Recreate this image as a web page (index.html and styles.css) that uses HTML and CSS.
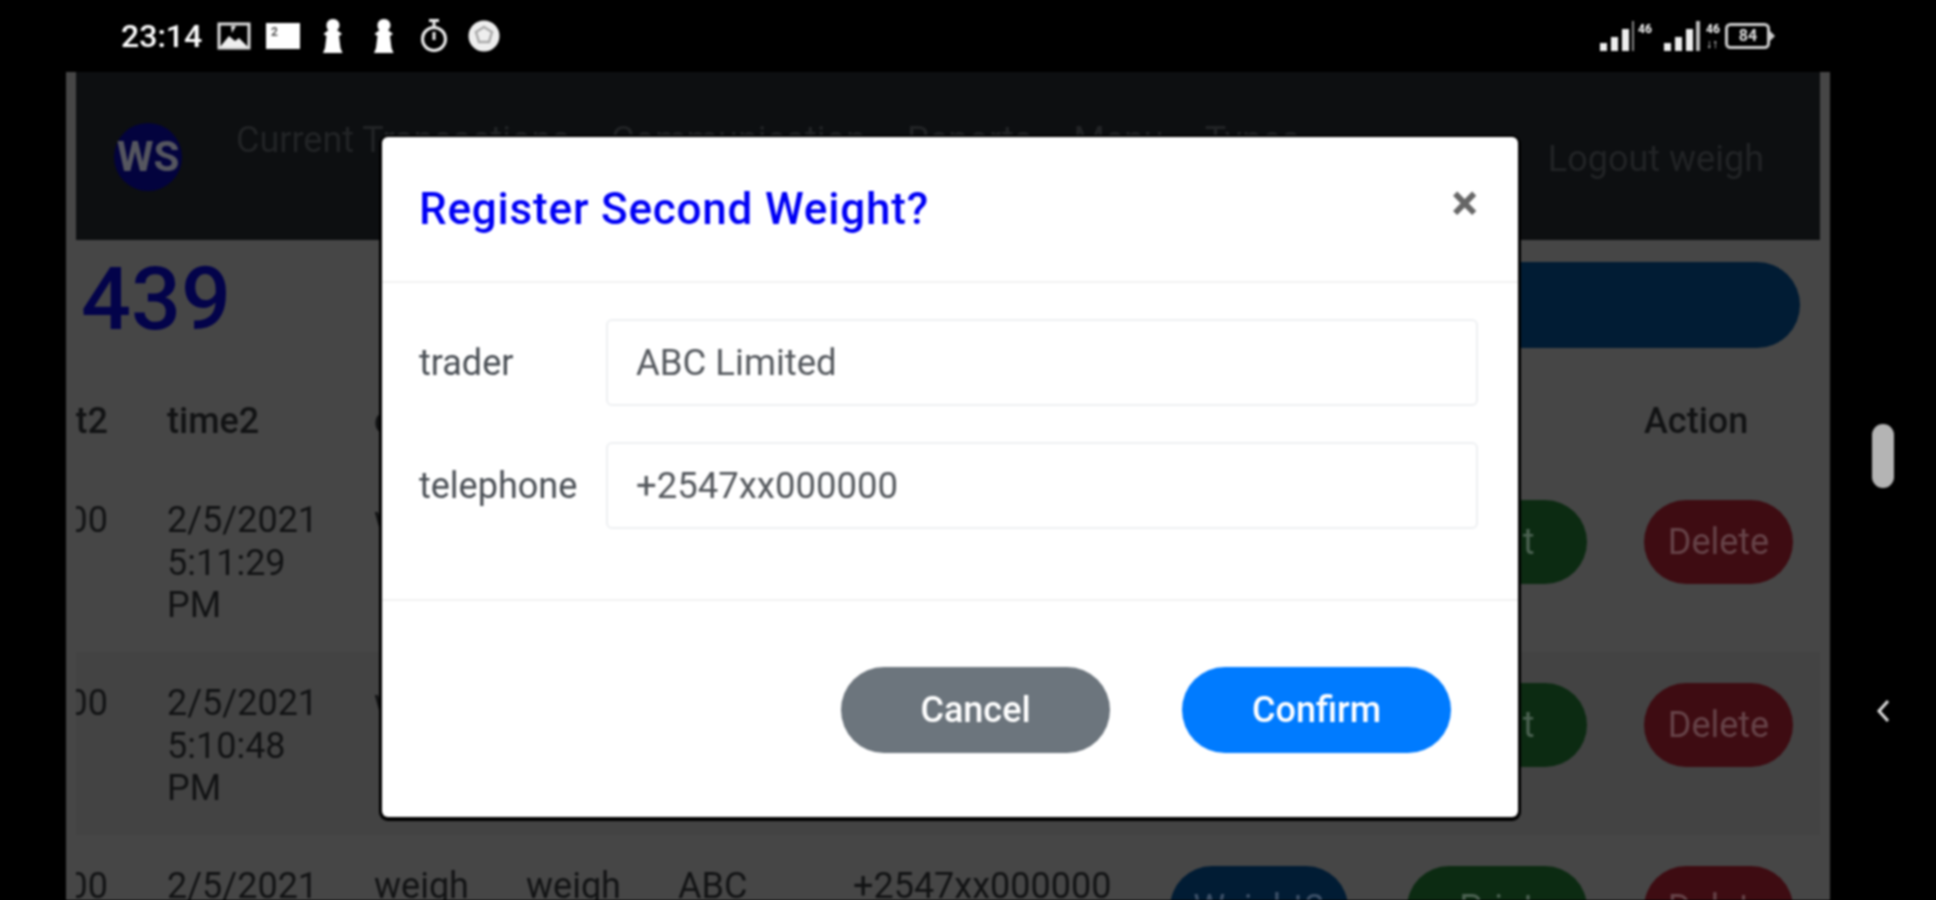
FILE: index.html

```html
<!DOCTYPE html>
<html lang="en">
<head>
    <meta charset="UTF-8">
    <meta name="viewport" content="width=device-width, initial-scale=1.0">
    <title>Weighbridge</title>
    <link rel="stylesheet" href="styles.css">
</head>
<body>
    <div class="screen">
        <!-- phone status bar -->
        <div class="status-bar">
            <span class="clock">23:14</span>
            <svg class="st-icon icon-pic" viewBox="0 0 34 28"><path d="M2 2h30v24H2z" fill="none" stroke="#ddd" stroke-width="3"/><path d="M3 25l9-11 6 5 4-3 9 9z" fill="#eee"/><path d="M14 4h5l-4 7z" fill="#ddd"/></svg>
            <svg class="st-icon icon-msg" viewBox="0 0 34 28"><path d="M0 1h34v26H0z" fill="#fff"/><text x="5" y="14" class="st-tiny-dark">2</text></svg>
            <svg class="st-icon icon-pawn" viewBox="0 0 20 34"><path d="M10 0c4 0 6.500 3 6.500 6 0 2.500-1 4-2.500 5l5 4-3 2 1.500 12 2 5H0l2-5 1.500-12-3-2 5-4C4 10 3.500 8.500 3.500 6c0-3 2.500-6 6.500-6z" fill="#fff"/></svg>
            <svg class="st-icon icon-pawn" viewBox="0 0 20 34"><path d="M10 0c4 0 6.500 3 6.500 6 0 2.500-1 4-2.500 5l5 4-3 2 1.500 12 2 5H0l2-5 1.500-12-3-2 5-4C4 10 3.500 8.500 3.500 6c0-3 2.500-6 6.500-6z" fill="#fff"/></svg>
            <svg class="st-icon icon-timer" viewBox="0 0 28 34"><circle cx="14" cy="20" r="11.500" fill="none" stroke="#eee" stroke-width="3"/><path d="M9 1.500h10M14 2v5M14 13v8" stroke="#eee" stroke-width="3" fill="none"/></svg>
            <svg class="st-icon icon-round" viewBox="0 0 32 34"><circle cx="16" cy="17" r="15.500" fill="#eee"/><path d="M16 8l8 5-3 10H11L8 13z" fill="none" stroke="#aaa" stroke-width="2.500"/></svg>

            <div class="status-right">
                <svg class="st-signal" viewBox="0 0 60 30"><path d="M0 22h7v8H0zM11 16h7v14h-7zM22 8h7v22h-7z" fill="#eee"/><path d="M32 0h2v30h-2z" fill="#888"/><text x="38" y="12" class="st-tiny">46</text></svg>
                <svg class="st-signal" viewBox="0 0 60 30"><path d="M0 22h7v8H0zM11 16h7v14h-7zM22 8h7v22h-7z" fill="#eee"/><path d="M32 0h4v30h-4z" fill="#bbb"/><text x="42" y="12" class="st-tiny">46</text><text x="42" y="27" class="st-tiny">↓↑</text></svg>
                <svg class="st-battery" viewBox="0 0 50 26"><rect x="1.500" y="1.500" width="42" height="23" rx="4" fill="none" stroke="#ccc" stroke-width="3"/><path d="M45 8l5 5-5 5z" fill="#ccc"/><text x="23" y="18" text-anchor="middle" class="st-batt-text">84</text></svg>
            </div>
        </div>

        <div class="main">
            <div class="side-left"></div>

            <div class="page">
                <nav class="navbar">
                    <div class="logo">WS</div>
                    <a class="nav-link">Current Transactions</a>
                    <a class="nav-link">Communication</a>
                    <a class="nav-link">Reports</a>
                    <a class="nav-link">Menu</a>
                    <a class="nav-link">Types</a>
                    <a class="nav-logout">Logout weigh</a>
                </nav>

                <div class="summary">
                    <div class="count">439</div>
                    <div class="summary-bar"></div>
                </div>

                <div class="table-wrap">
                    <table class="tx-table">
                        <thead>
                            <tr>
                                <th class="col-first">weight2</th>
                                <th class="col-time">time2</th>
                                <th class="col-op">operator1</th>
                                <th class="col-op">operator2</th>
                                <th class="col-trader">trader</th>
                                <th class="col-phone">telephone</th>
                                <th class="col-btn">Weight2</th>
                                <th class="col-btn">Print</th>
                                <th class="col-action">Action</th>
                            </tr>
                        </thead>
                        <tbody>
                            <tr>
                                <td class="col-first">2000</td>
                                <td class="col-time">2/5/2021 5:11:29 PM</td>
                                <td>weigh</td>
                                <td>weigh</td>
                                <td>ABC Limited</td>
                                <td>+2547xx000000</td>
                                <td><button class="pill pill-blue">Weight2</button></td>
                                <td><button class="pill pill-green">Print</button></td>
                                <td><button class="pill pill-red">Delete</button></td>
                            </tr>
                            <tr class="striped">
                                <td class="col-first">3000</td>
                                <td class="col-time">2/5/2021 5:10:48 PM</td>
                                <td>weigh</td>
                                <td>weigh</td>
                                <td>ABC Limited</td>
                                <td>+2547xx000000</td>
                                <td><button class="pill pill-blue">Weight2</button></td>
                                <td><button class="pill pill-green">Print</button></td>
                                <td><button class="pill pill-red">Delete</button></td>
                            </tr>
                            <tr>
                                <td class="col-first">1000</td>
                                <td class="col-time">2/5/2021 5:09:12 PM</td>
                                <td>weigh</td>
                                <td>weigh</td>
                                <td>ABC Limited</td>
                                <td>+2547xx000000</td>
                                <td><button class="pill pill-blue">Weight2</button></td>
                                <td><button class="pill pill-green">Print</button></td>
                                <td><button class="pill pill-red">Delete</button></td>
                            </tr>
                        </tbody>
                    </table>
                </div>

                <!-- confirm dialog -->
                <div class="modal">
                    <div class="modal-header">
                        <h5 class="modal-title">Register Second Weight?</h5>
                        <span class="modal-close">&times;</span>
                    </div>
                    <div class="modal-body">
                        <div class="field">
                            <label class="field-label">trader</label>
                            <input class="field-input" value="ABC Limited">
                        </div>
                        <div class="field">
                            <label class="field-label">telephone</label>
                            <input class="field-input" value="+2547xx000000">
                        </div>
                    </div>
                    <div class="modal-footer">
                        <button class="modal-btn btn-cancel">Cancel</button>
                        <button class="modal-btn btn-confirm">Confirm</button>
                    </div>
                </div>
            </div>

            <div class="side-right">
                <div class="scroll-thumb"></div>
                <svg class="chevron" viewBox="0 0 14 24"><path d="M12 2L3 12l9 10" fill="none" stroke="#ddd" stroke-width="3"/></svg>
            </div>
        </div>
    </div>
</body>
</html>
```

FILE: styles.css

```css
* {
    box-sizing: border-box;
}
body {
    margin: 0;
    background: #000;
    font-family: Roboto, 'Liberation Sans', sans-serif;
}
.screen {
    height: 900px;
    overflow: hidden;
    display: flex;
    flex-direction: column;
    background: #000;
    filter: blur(1px);
}

/* status bar */
.status-bar {
    height: 72px;
    flex: none;
    display: flex;
    align-items: center;
    padding-left: 121px;
    color: #fff;
}
.clock {
    font-size: 32px;
    font-weight: 500;
    width: 96px;
}
.st-icon {
    display: block;
}
.icon-pic {
    width: 34px;
    height: 28px;
    margin-right: 15px;
}
.icon-msg {
    width: 34px;
    height: 28px;
    margin-right: 23px;
}
.icon-pawn {
    width: 20px;
    height: 34px;
    margin-right: 31px;
}
.icon-timer {
    width: 28px;
    height: 34px;
    margin-left: -5px;
    margin-right: 20px;
}
.icon-round {
    width: 32px;
    height: 34px;
}
.status-right {
    margin-left: auto;
    margin-right: 161px;
    display: flex;
    align-items: center;
}
.st-signal {
    width: 60px;
    height: 30px;
    margin-right: 4px;
}
.st-battery {
    width: 50px;
    height: 26px;
    margin-left: -3px;
}
.st-tiny {
    font: 700 12px Roboto, sans-serif;
    fill: #fff;
}
.st-tiny-dark {
    font: 700 12px Roboto, sans-serif;
    fill: #555;
}
.st-batt-text {
    font: 700 16px Roboto, sans-serif;
    fill: #ddd;
}

.main {
    flex: 1;
    display: flex;
    min-height: 0;
}
.side-left {
    width: 66px;
    flex: none;
}
.page {
    width: 1764px;
    flex: none;
    position: relative;
    background: #464646;
    padding: 0 10px;
    overflow: hidden;
    font-size: 36px;
    color: #121314;
}
.side-right {
    flex: 1;
    display: flex;
    flex-direction: column;
    align-items: center;
    padding-top: 352px;
}
.scroll-thumb {
    width: 22px;
    height: 64px;
    border-radius: 11px;
    background: #b4b4b4;
}
.chevron {
    width: 14px;
    height: 24px;
    margin-top: 211px;
}

/* navbar */
.navbar {
    height: 168px;
    background: #0d0f11;
    display: flex;
    align-items: flex-start;
    color: #222426;
}
.logo {
    width: 68px;
    height: 68px;
    margin: 51px 0 0 38px;
    border-radius: 50%;
    background: #03033e;
    color: #55565f;
    font-size: 42px;
    font-weight: 700;
    line-height: 68px;
    text-align: center;
}
.nav-link {
    margin: 47px 0 0 54px;
    line-height: 42px;
}
.nav-link + .nav-link {
    margin-left: 41px;
}
.nav-logout {
    margin: 66px 56px 0 auto;
    line-height: 42px;
}

/* count and bar */
.summary {
    display: flex;
    align-items: center;
    height: 86px;
    margin-top: 22px;
    padding: 0 20px 0 5px;
}
.count {
    font-size: 88px;
    font-weight: 500;
    color: #03034a;
    line-height: 86px;
    padding-bottom: 12px;
}
.summary-bar {
    margin-left: auto;
    width: 1000px;
    height: 86px;
    border-radius: 43px;
    background: #011c34;
}

/* table */
.table-wrap {
    margin-top: 22px;
    overflow: hidden;
}
.tx-table {
    table-layout: fixed;
    border-collapse: collapse;
    width: 1844px;
    margin-left: -100px;
    line-height: 42.5px;
}
.tx-table th {
    height: 99px;
    padding: 4px 0 0;
    font-weight: 500;
    text-align: left;
    white-space: nowrap;
    overflow: hidden;
}
.tx-table td {
    height: 183px;
    padding: 30px 10px 0 0;
    vertical-align: top;
}
.tx-table th.col-first,
.tx-table td.col-first {
    padding-right: 59px;
    text-align: right;
}
.tx-table td.col-time {
    padding-right: 40px;
}
.striped {
    background: #434343;
}
.col-first {
    width: 191px;
}
.col-time {
    width: 207px;
}
.col-op {
    width: 152px;
}
.col-trader {
    width: 175px;
}
.col-phone {
    width: 317px;
}
.col-btn {
    width: 237px;
}
.col-action {
    width: 176px;
}
.pill {
    height: 84px;
    border: 0;
    border-radius: 42px;
    padding: 0;
    font: inherit;
    margin-top: 1px;
}
.pill-blue {
    width: 178px;
    background: #011c34;
    color: #3c5068;
}
.pill-green {
    width: 180px;
    background: #0c2b12;
    color: #4c6252;
}
.pill-red {
    width: 149px;
    background: #3e0c12;
    color: #664348;
}

/* modal */
.modal {
    position: absolute;
    left: 316px;
    top: 65px;
    width: 1136px;
    height: 680px;
    display: flex;
    flex-direction: column;
    background: #fff;
    border-radius: 6px;
    box-shadow: 0 1px 0 3px #000;
    color: #4a4f55;
}
.modal-header {
    height: 146px;
    flex: none;
    display: flex;
    justify-content: space-between;
    align-items: center;
    padding: 0 40px 0 37px;
    border-bottom: 2px solid #f2f2f2;
}
.modal-title {
    margin: 0;
    font-size: 44px;
    font-weight: 500;
    letter-spacing: 0.8px;
    color: #0000f5;
}
.modal-close {
    font-size: 50px;
    font-weight: 700;
    line-height: 50px;
    color: #666;
    margin-bottom: 12px;
}
.modal-body {
    height: 318px;
    flex: none;
    padding: 36px 40px 0 37px;
    border-bottom: 2px solid #f2f2f2;
}
.field {
    display: flex;
    align-items: center;
    margin-bottom: 36px;
}
.field-label {
    width: 187px;
    flex: none;
    font-size: 36px;
}
.field-input {
    flex: 1;
    height: 87px;
    min-width: 0;
    border: 2px solid #eef0f2;
    border-radius: 6px;
    padding: 0 28px;
    font: inherit;
    font-size: 36.5px;
    color: #55595e;
    background: #fff;
}
.modal-footer {
    flex: 1;
    display: flex;
    justify-content: flex-end;
    gap: 72px;
    padding: 66px 67px 0 0;
}
.modal-btn {
    width: 269px;
    height: 86px;
    border: 0;
    border-radius: 43px;
    color: #fff;
    font: inherit;
    font-size: 36px;
    font-weight: 500;
}
.btn-cancel {
    background: #6c757d;
}
.btn-confirm {
    background: #007bff;
}
```
